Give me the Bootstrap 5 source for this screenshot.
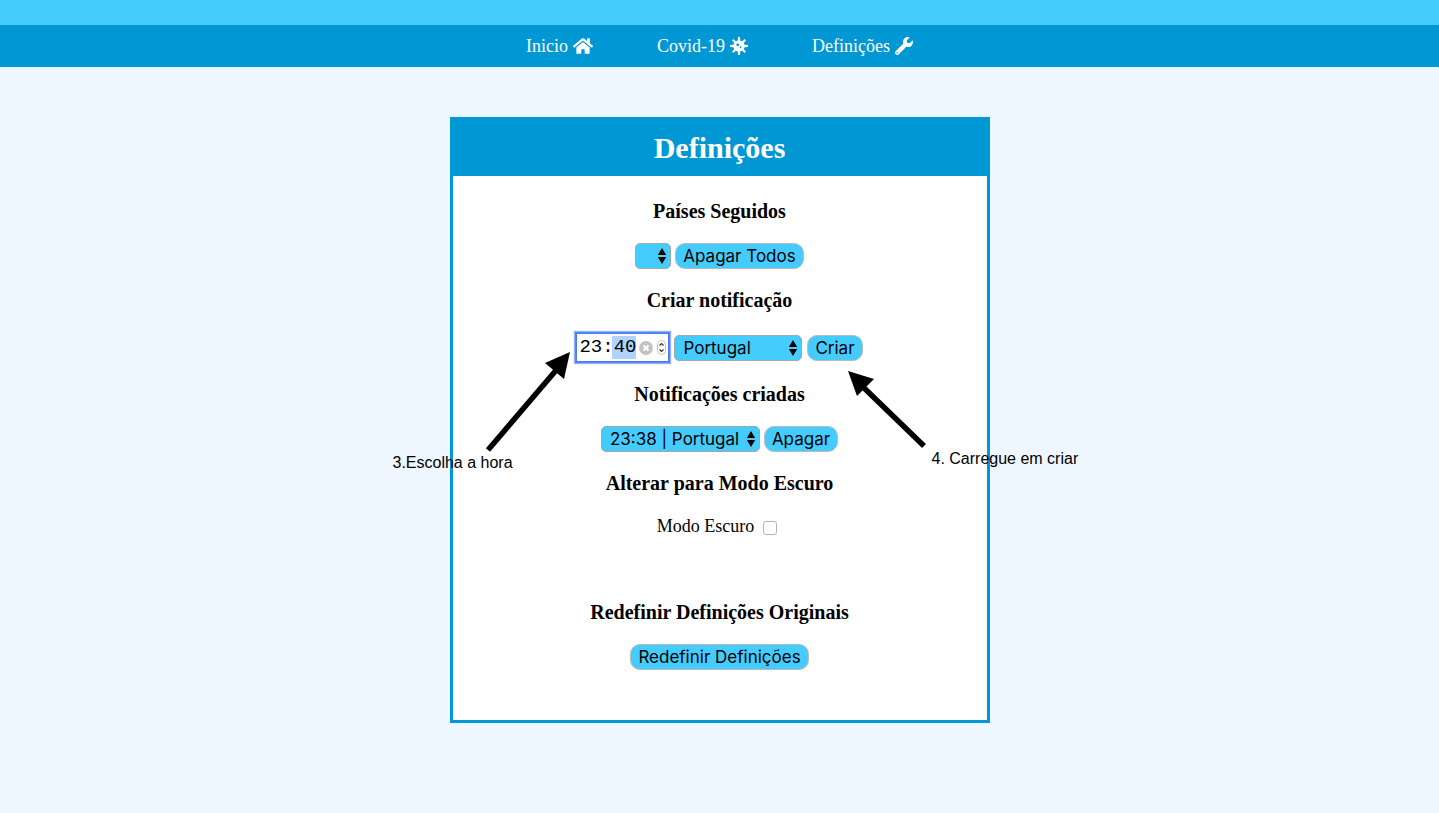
<!DOCTYPE html>
<html lang="pt">
<head>
<meta charset="utf-8">
<meta name="viewport" content="width=device-width, initial-scale=1">
<title>Definições</title>
<link rel="stylesheet" href="https://cdn.jsdelivr.net/npm/bootstrap@5.3.0/dist/css/bootstrap.min.css">
<style>
  :root { --brand: #0098d4; --sky: #45ccff; }
  body { background: #eef6ff; color: #000; font-family: "Liberation Serif", serif; font-size: 18px; line-height: 23px; }
  .top-strip { height: 25px; background: var(--sky); }
  .main-nav { background: var(--brand); height: 42px; gap: 64px; }
  .main-nav a { color: #fff; text-decoration: none; display: flex; align-items: center; gap: 5px; }
  .main-nav svg { fill: currentColor; height: 18px; }
  .panel { max-width: 540px; margin: 50px auto; border: 3px solid var(--brand); background: #fff; }
  .panel h1 { background: var(--brand); color: #fff; font-size: 30px; line-height: 56px; font-weight: 700; margin: 0; }
  .panel-content { padding: 24px 0 50px; }
  .panel h2 { font-size: 20px; line-height: 23px; font-weight: 700; margin: 0; }
  .group { display: flex; flex-direction: column; gap: 20px; align-items: center; }
  .stack { display: flex; flex-direction: column; gap: 20px; }
  .reset-group { margin-top: 43px; }
  .ctl { height: 26px; font-family: Inter, sans-serif; font-size: 17px; line-height: 24px; color: #000; background-color: var(--sky); border: 1px solid #bbb; border-radius: 10px; padding: 0 7px; }
  select.ctl { appearance: none; border-color: #a6a6a6; border-radius: 5px; padding: 0 20px 0 8px;
    background-image: url("data:image/svg+xml,%3Csvg xmlns='http://www.w3.org/2000/svg' viewBox='0 0 10 16'%3E%3Cpath d='M5 0L9.200 7H.8zM5 16L.8 9h8.400z'/%3E%3C/svg%3E");
    background-repeat: no-repeat; background-size: 10px 16px; background-position: right 3px center; }
  .w-empty { width: 36px; }
  .w-country { width: 128px; }
  .w-alert { width: 159px; }
  .time-row { gap: 5px; }
  .time-box { height: 29px; margin: 1px 0; width: 93px; padding: 0 2px; background: #fff; border: 1px solid #4a7af0; box-shadow: 0 0 0 1px #5c88f5, 0 0 1px 2px #8fb0fa; }
  .time-box input { width: 57px; height: 23px; border: 0; border-radius: 0; padding: 0; outline: 0; font: 700 19px/23px "Liberation Mono", monospace; font-weight: 400; color: #000; background: linear-gradient(#b0d4ff, #b0d4ff) right / 24px 100% no-repeat; }
  .time-box button { border: 0; padding: 0; background: none; display: flex; }
  .time-box .clear { margin: 0 4px 0 3px; }
  .dark-row input { appearance: none; width: 14px; height: 14px; border: 1px solid #b4b4b4; border-radius: 3px; background: #fff; margin: 3px 5px 0 9px; }
  .note { position: absolute; pointer-events: none; font: 16px/18px "Liberation Sans", sans-serif; white-space: nowrap; }
  .note svg { display: block; }
  .note-hour { left: -60px; top: 230px; }
  .note-hour svg { margin-left: 91px; }
  .note-create { left: 393px; top: 249px; }
  .note-create span { margin-left: 86px; }
</style>
</head>
<body>
<header>
  <div class="top-strip"></div>
  <nav class="main-nav d-flex justify-content-center align-items-center">
    <a href="#">Inicio
      <svg width="20" viewBox="0 0 576 512" aria-hidden="true"><path d="M280.370 148.260L96 300.110V464a16 16 0 0 0 16 16l112.060-.29a16 16 0 0 0 15.920-16V368a16 16 0 0 1 16-16h64a16 16 0 0 1 16 16v95.640a16 16 0 0 0 16 16.050L464 480a16 16 0 0 0 16-16V300L295.670 148.260a12.190 12.190 0 0 0-15.300 0zM571.600 251.470L488 182.560V44.050a12 12 0 0 0-12-12h-56a12 12 0 0 0-12 12v72.610L318.470 43a48 48 0 0 0-61 0L4.340 251.470a12 12 0 0 0-1.600 16.900l25.500 31A12 12 0 0 0 45.150 301l235.220-193.740a12.190 12.190 0 0 1 15.300 0L530.900 301a12 12 0 0 0 16.900-1.600l25.500-31a12 12 0 0 0-1.700-16.930z"/></svg></a>
    <a href="#">Covid-19
      <svg width="18" viewBox="0 0 18 18" aria-hidden="true"><path fill-rule="evenodd" d="M8 0h2l.2 3.400 2 .8 2.400-2.200 1.400 1.400-2.200 2.400.8 2 3.400.2v2l-3.400.2-.8 2 2.200 2.400-1.400 1.400-2.400-2.200-2 .8L10 18H8l-.2-3.400-2-.8L3.400 16 2 14.600l2.200-2.400-.8-2L0 10V8l3.400-.2.8-2L2 3.400 3.400 2l2.400 2.200 2-.8zM7.700 6.400a1.400 1.400 0 1 0 0 2.800 1.400 1.400 0 0 0 0-2.800zM10.600 9.200a.9.9 0 1 0 0 1.800.9.9 0 0 0 0-1.800z"/></svg></a>
    <a href="#">Definições
      <svg width="18" viewBox="0 0 512 512" aria-hidden="true"><path fill-rule="evenodd" d="M507.730 109.100c-2.240-9.030-13.540-12.090-20.120-5.510l-74.360 74.360-67.880-11.310-11.310-67.880 74.360-74.360c6.620-6.620 3.430-17.900-5.660-20.160-47.380-11.740-99.550.91-136.580 37.930-39.640 39.640-50.550 97.100-34.050 147.200L18.740 402.760c-24.990 24.990-24.990 65.510 0 90.500 24.990 24.990 65.510 24.990 90.500 0l213.210-213.210c50.120 16.710 107.470 5.680 147.370-34.220 37.070-37.070 49.700-89.320 37.910-136.730zM64 472c-13.250 0-24-10.750-24-24 0-13.260 10.750-24 24-24s24 10.740 24 24c0 13.250-10.750 24-24 24z"/></svg></a>
  </nav>
</header>

<main class="panel position-relative text-center">
  <h1>Definições</h1>
  <div class="panel-content stack">
    <section class="group">
      <h2>Países Seguidos</h2>
      <div class="d-flex gap-1">
        <select class="ctl w-empty" aria-label="Países seguidos"><option></option></select>
        <button type="button" class="ctl">Apagar Todos</button>
      </div>
    </section>
    <section class="group">
      <h2>Criar notificação</h2>
      <div class="time-row d-flex align-items-center">
        <div class="time-box d-flex align-items-center">
          <input type="text" value="23:40" aria-label="Hora">
          <button type="button" aria-label="Limpar" class="clear"><svg width="14" height="14" viewBox="0 0 14 14"><circle cx="7" cy="7" r="7" fill="#c3c3c3"/><path d="M4.500 4.500l5 5m0-5l-5 5" stroke="#fff" stroke-width="2"/></svg></button>
          <button type="button" aria-label="Ajustar hora"><svg width="9" height="15" viewBox="0 0 9 15"><rect x=".5" y=".5" width="8" height="14" rx="4" fill="#fff" stroke="#c4c4c4"/><path d="M2.500 5.500l2-2 2 2m-4 4l2 2 2-2" fill="none" stroke="#333" stroke-width="1.200"/></svg></button>
        </div>
        <select class="ctl w-country" aria-label="País"><option>Portugal</option></select>
        <button type="button" class="ctl">Criar</button>
      </div>
    </section>
    <section class="group">
      <h2>Notificações criadas</h2>
      <div class="d-flex gap-1">
        <select class="ctl w-alert" aria-label="Notificações criadas"><option>23:38 | Portugal</option></select>
        <button type="button" class="ctl">Apagar</button>
      </div>
    </section>
    <section class="group">
      <h2>Alterar para Modo Escuro</h2>
      <div class="dark-row d-flex align-items-center">
        <label for="dark">Modo Escuro</label><input type="checkbox" id="dark">
      </div>
    </section>
    <section class="group reset-group">
      <h2>Redefinir Definições Originais</h2>
      <button type="button" class="ctl">Redefinir Definições</button>
    </section>
  </div>

  <div class="note note-hour text-start">
    <svg width="90" height="104" viewBox="0 0 90 104" aria-hidden="true"><path d="M4 100L74 18" stroke="#000" stroke-width="5.500"/><path d="M86 2L61 13L80 29z"/></svg>
    <span>3.Escolha a hora</span>
  </div>
  <div class="note note-create text-start">
    <svg width="90" height="81" viewBox="0 0 90 81" aria-hidden="true"><path d="M78 77L15 16" stroke="#000" stroke-width="5.500"/><path d="M2 2L28 10L11 27z"/></svg>
    <span>4. Carregue em criar</span>
  </div>
</main>
<script src="https://cdn.jsdelivr.net/npm/bootstrap@5.3.0/dist/js/bootstrap.bundle.min.js"></script>
</body>
</html>
